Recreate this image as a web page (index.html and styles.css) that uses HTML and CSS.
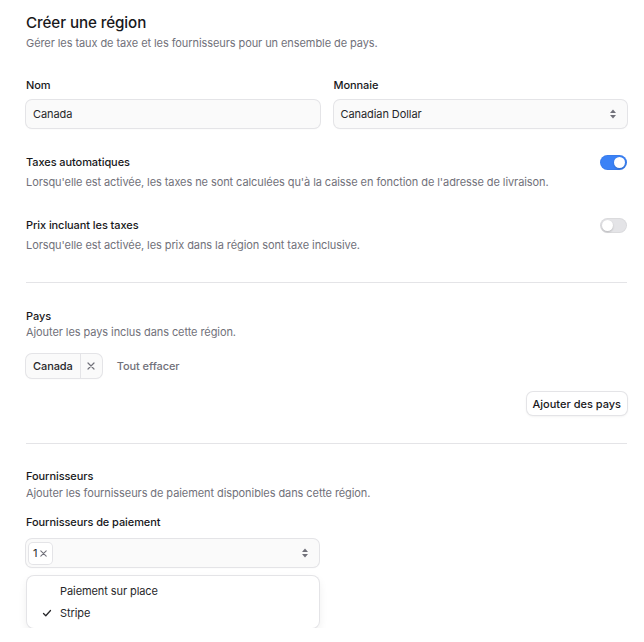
FILE: index.html
```html
<!DOCTYPE html>
<html lang="fr">
<head>
<meta charset="utf-8">
<title>Créer une région</title>
<link rel="stylesheet" href="styles.css">
</head>
<body>
<main class="page">
  <header class="head">
    <h1 class="title">Créer une région</h1>
    <p class="muted">Gérer les taux de taxe et les fournisseurs pour un ensemble de pays.</p>
  </header>

  <div class="grid2">
    <div class="field">
      <label class="label">Nom</label>
      <div class="input">Canada</div>
    </div>
    <div class="field">
      <label class="label">Monnaie</label>
      <div class="input select">
        <span>Canadian Dollar</span>
        <svg class="chev" width="8" height="12" viewBox="0 0 8 12"><path d="M4 1.5L7 5H1z" fill="#71717a"/><path d="M4 10.5L1 7h6z" fill="#71717a"/></svg>
      </div>
    </div>
  </div>

  <div class="switch-row first">
    <div class="switch-text">
      <div class="label">Taxes automatiques</div>
      <p class="muted tight">Lorsqu'elle est activée, les taxes ne sont calculées qu'à la caisse en fonction de l'adresse de livraison.</p>
    </div>
    <span class="toggle on"><span class="knob"></span></span>
  </div>

  <div class="switch-row second">
    <div class="switch-text">
      <div class="label">Prix incluant les taxes</div>
      <p class="muted tight">Lorsqu'elle est activée, les prix dans la région sont taxe inclusive.</p>
    </div>
    <span class="toggle"><span class="knob"></span></span>
  </div>

  <hr class="divider d1">

  <section class="pays">
    <div class="label">Pays</div>
    <p class="muted">Ajouter les pays inclus dans cette région.</p>
    <div class="chips">
      <span class="chip"><span class="chip-text">Canada</span><span class="chip-x">
        <svg width="10" height="10" viewBox="0 0 10 10"><path d="M2 2l6 6M8 2l-6 6" stroke="#71717a" stroke-width="1.2" stroke-linecap="round"/></svg>
      </span></span>
      <span class="clear">Tout effacer</span>
    </div>
    <div class="btn-row"><button class="btn">Ajouter des pays</button></div>
  </section>

  <hr class="divider d2">

  <section class="fourn">
    <div class="label">Fournisseurs</div>
    <p class="muted">Ajouter les fournisseurs de paiement disponibles dans cette région.</p>
    <div class="label sub">Fournisseurs de paiement</div>
    <div class="half">
      <div class="input select multi">
        <span class="count">1<svg width="9" height="9" viewBox="0 0 10 10"><path d="M2 2l6 6M8 2l-6 6" stroke="#71717a" stroke-width="1.2" stroke-linecap="round"/></svg></span>
        <svg class="chev" width="8" height="12" viewBox="0 0 8 12"><path d="M4 1.5L7 5H1z" fill="#71717a"/><path d="M4 10.5L1 7h6z" fill="#71717a"/></svg>
      </div>
      <ul class="menu">
        <li class="item"><span class="check"></span>Paiement sur place</li>
        <li class="item"><span class="check"><svg width="12" height="12" viewBox="0 0 12 12"><path d="M2.5 6.5l2.3 2.3L9.5 3.5" fill="none" stroke="#27272a" stroke-width="1.3" stroke-linecap="round" stroke-linejoin="round"/></svg></span>Stripe</li>
      </ul>
    </div>
  </section>
</main>
</body>
</html>
```

FILE: styles.css
```css
* { box-sizing: border-box; }
html, body { margin: 0; padding: 0; background: #ffffff; }
body {
  font-family: Inter, "Noto Sans", sans-serif;
  color: #18181b;
  font-size: 11px;
  letter-spacing: -0.08px;
  line-height: 16px;
}
.page { padding: 13px 17px 0 26px; }
p { margin: 0; }
.title {
  margin: 0;
  font-size: 15.2px;
  line-height: 20px;
  font-weight: 500;
  letter-spacing: -0.1px;
}
.muted { color: #71717a; margin-top: 2px; }
.muted.tight { margin-top: 4px; }
.label { font-weight: 500; color: #18181b; display: block; }

.grid2 {
  margin-top: 26px;
  display: grid;
  grid-template-columns: 1fr 1fr;
  gap: 14px;
}
.field { display: flex; flex-direction: column; gap: 7px; }
.input {
  height: 28px;
  background: #fafafa;
  border-radius: 6px;
  box-shadow: 0 0 0 1px #e4e4e7, 0 1px 2px rgba(0,0,0,0.06);
  padding: 0 7px;
  display: flex;
  align-items: center;
  color: #27272a;
}
.select { justify-content: space-between; padding-right: 10px; }
.chev { display: block; }

.switch-row {
  display: flex;
  justify-content: space-between;
  align-items: flex-start;
}
.switch-row.first { margin-top: 26px; }
.switch-row.second { margin-top: 27px; }
.toggle {
  width: 27px;
  height: 15px;
  border-radius: 8px;
  background: #e4e4e7;
  position: relative;
  margin-top: 1px;
  box-shadow: inset 0 0 0 1px rgba(0,0,0,0.04);
}
.toggle.on { background: #3b82f6; }
.knob {
  position: absolute;
  top: 2px;
  left: 2px;
  width: 11px;
  height: 11px;
  border-radius: 50%;
  background: #fff;
  box-shadow: 0 1px 2px rgba(0,0,0,0.2);
}
.toggle.on .knob { left: 14px; }

.divider {
  border: 0;
  height: 1px;
  background: #e4e4e7;
  margin: 0;
}
.d1 { margin-top: 29px; }
.d2 { margin-top: 28px; }

.pays { padding-top: 25px; }
.pays .muted { margin-top: 0; }
.chips {
  margin-top: 14px;
  display: flex;
  align-items: center;
  gap: 15px;
}
.chip {
  display: inline-flex;
  height: 24px;
  border-radius: 6px;
  background: #fafafa;
  box-shadow: 0 0 0 1px #e4e4e7, 0 1px 2px rgba(0,0,0,0.06);
  align-items: stretch;
}
.chip-text {
  padding: 0 7px;
  display: flex;
  align-items: center;
  font-weight: 500;
  color: #27272a;
  border-right: 1px solid #e4e4e7;
}
.chip-x {
  width: 21px;
  display: flex;
  align-items: center;
  justify-content: center;
}
.clear { color: #71717a; font-weight: 500; }
.btn-row { display: flex; justify-content: flex-end; margin-top: 14px; }
.btn {
  font: inherit;
  font-weight: 500;
  color: #18181b;
  background: #fff;
  border: 0;
  border-radius: 6px;
  height: 23px;
  padding: 0 6px;
  box-shadow: 0 0 0 1px #e4e4e7, 0 1px 3px rgba(0,0,0,0.1);
}

.fourn { padding-top: 24px; }
.fourn .muted { margin-top: 1px; }
.label.sub { margin-top: 13px; }
.half { width: 293px; margin-top: 9px; }
.multi { padding-left: 3px; }
.count {
  height: 21px;
  padding: 0 4px;
  background: #fff;
  border-radius: 4px;
  box-shadow: 0 0 0 1px #e4e4e7;
  display: inline-flex;
  align-items: center;
  gap: 2px;
  color: #27272a;
}
.menu {
  list-style: none;
  margin: 9px 0 0 1px;
  padding: 4px 0;
  background: #fff;
  border-radius: 7px;
  box-shadow: 0 0 0 1px #e4e4e7, 0 4px 10px rgba(0,0,0,0.08);
}
.item {
  height: 22px;
  display: flex;
  align-items: center;
  color: #27272a;
}
.check {
  width: 33px;
  display: flex;
  justify-content: flex-end;
  padding-right: 7px;
}
```
